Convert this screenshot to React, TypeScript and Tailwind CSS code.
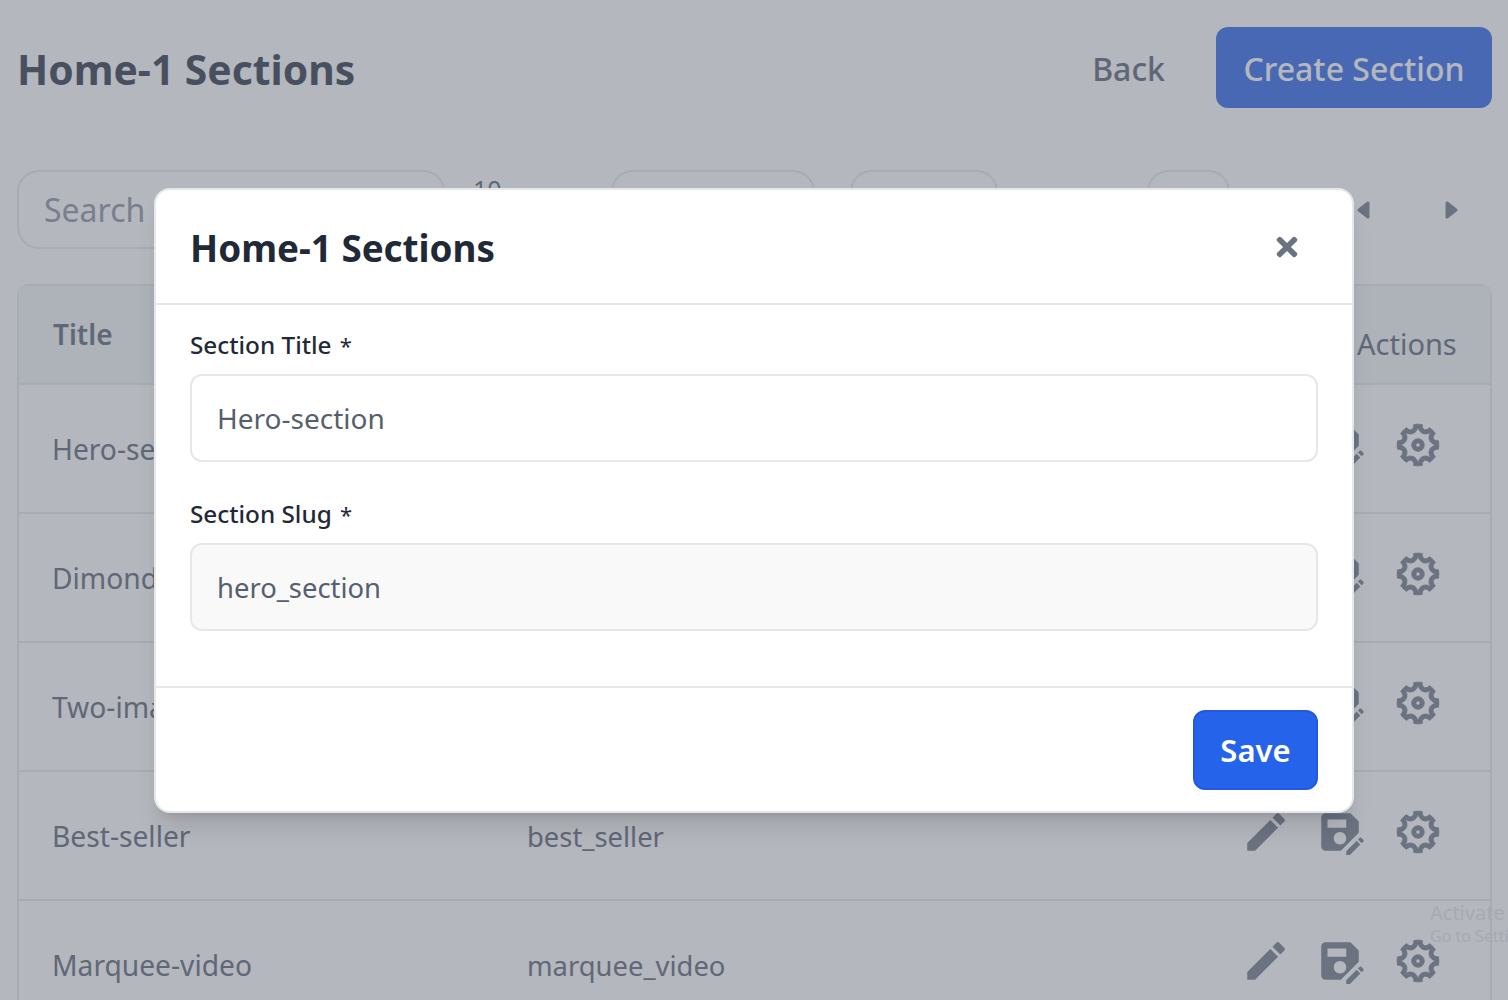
import { MdEdit, MdSaveAs } from "react-icons/md";
import { RiSettings5Line } from "react-icons/ri";
import { FaTimes } from "react-icons/fa";

const rows = [
  { title: "Hero-section", slug: "hero_section" },
  { title: "Dimond-section", slug: "dimond_section" },
  { title: "Two-image", slug: "two_image" },
  { title: "Best-seller", slug: "best_seller" },
  { title: "Marquee-video", slug: "marquee_video" },
];

function RowActions() {
  return (
    <div className="flex items-center -mt-[7px] text-[#8a909d]">
      <MdEdit className="w-[50px] h-[50px]" />
      <MdSaveAs className="w-[50px] h-[50px] ml-[24px]" />
      <RiSettings5Line className="w-[50px] h-[50px] ml-[28px]" stroke="currentColor" strokeWidth={0.4} />
    </div>
  );
}

function Caret({ flip }: { flip?: boolean }) {
  return (
    <svg viewBox="0 0 13 18" className={flip ? "w-[13px] h-[18px] rotate-180" : "w-[13px] h-[18px]"}>
      <path d="M11 2 L2 9 L11 16 Z" fill="currentColor" stroke="currentColor" strokeWidth="3" strokeLinejoin="round" />
    </svg>
  );
}

function SectionsPage() {
  return (
    <div className="pl-[17px] pr-[16px] h-[1000px] overflow-hidden bg-white text-[#79808f]">
      {/* Header */}
      <div className="flex items-center justify-between pt-[27px] pb-[62px]">
        <h1 className="pt-[4px] text-[40.8px] leading-[77px] font-bold text-[#525a68]">Home-1 Sections</h1>
        <div className="flex items-center gap-[51px]">
          <button className="pt-[2px] text-[32px] font-medium text-[#777e8c]">Back</button>
          <button className="pt-[2px] h-[81px] w-[276px] rounded-xl bg-[#5280f0] text-[32px] font-medium text-white">
            Create Section
          </button>
        </div>
      </div>

      {/* Filters */}
      <div className="flex items-center h-[79px]">
        <div className="w-[428px] h-[79px] flex items-center px-[25px] rounded-[22px] border-2 border-[#ebecf0] text-[32px] text-[#a0a5b2]">
          Search
        </div>
        <div className="w-[166px] pl-[28px] text-[25px] -mt-[40px]">10</div>
        <div className="w-[204px] h-[79px] rounded-[22px] border-2 border-[#ebecf0]" />
        <div className="w-[35px]" />
        <div className="w-[148px] h-[79px] rounded-[22px] border-2 border-[#ebecf0]" />
        <div className="w-[149px]" />
        <div className="w-[83px] h-[79px] rounded-[22px] border-2 border-[#ebecf0]" />
        <div className="flex flex-1 items-center justify-end gap-[75px] pr-[34px] text-[#8a909d]">
          <Caret />
          <Caret flip />
        </div>
      </div>

      {/* Table */}
      <div className="mt-[35px] rounded-t-xl border-2 border-b-0 border-[#ebecf0]">
        <div className="flex h-[99px] border-b-2 border-[#ebecf0] bg-[#f6f7f9]">
          <div className="w-[508px] pl-[34px] pt-[26px] text-[28px] leading-[44px] font-semibold">Title</div>
          <div className="flex-1" />
          <div className="w-[133px] pt-[36px] text-[29px] leading-[44px]">Actions</div>
        </div>
        {rows.map((row) => (
          <div key={row.slug} className="flex items-center h-[129px] border-b-2 border-[#ebecf0]">
            <div className="w-[508px] pl-[33px] pt-[2px] text-[28.2px]">{row.title}</div>
            <div className="flex-1 pt-[2px] text-[27.4px]">{row.slug}</div>
            <div className="w-[249px]">
              <RowActions />
            </div>
          </div>
        ))}
      </div>
    </div>
  );
}

export default function App() {
  return (
    <div className="relative h-[1000px] overflow-hidden font-['Noto_Sans',sans-serif]">
      <SectionsPage />

      {/* Windows activation watermark */}
      <div className="absolute left-[1430px] top-[899px] w-[78px] overflow-hidden whitespace-nowrap text-[#eaeaee]">
        <div className="text-[20px] leading-[27px]">Activate Windows</div>
        <div className="text-[16px] leading-[21px]">Go to Settings to activate</div>
      </div>

      {/* Modal */}
      <div className="absolute inset-0 z-10 flex justify-center pt-[188px] bg-[#374151]/[0.375]">
        <div className="w-[1200px] h-[625px] rounded-2xl bg-white shadow-xl border-2 border-[#e5e7eb] flex flex-col">
          <div className="flex items-center justify-between h-[115px] border-b-2 border-[#e5e7eb] pl-[34px] pr-[50px]">
            <h2 className="pt-[4px] text-[36.8px] font-bold text-[#1f2937]">Home-1 Sections</h2>
            <FaTimes className="w-[30px] h-[30px] text-[#6b7280]" />
          </div>
          <div className="flex-1 px-[34px] pt-[22px]">
            <label className="block text-[24.3px] leading-[36px] font-medium text-[#1f2937]">
              Section Title <span className="ml-[2px] text-[22px] font-normal">*</span>
            </label>
            <div className="mt-[11px] h-[88px] flex items-center pl-[25px] pr-[26px] rounded-xl border-2 border-[#e5e7eb] text-[28px] text-[#555f6e]">
              Hero-section
            </div>
            <label className="block mt-[34px] text-[24.3px] leading-[36px] font-medium text-[#1f2937]">
              Section Slug <span className="ml-[2px] text-[22px] font-normal">*</span>
            </label>
            <div className="mt-[11px] h-[88px] flex items-center pl-[25px] pr-[26px] pt-[2px] rounded-xl border-2 border-[#e5e7eb] bg-[#f9f9fa] text-[27.4px] text-[#555f6e]">
              hero_section
            </div>
          </div>
          <div className="flex justify-end h-[125px] border-t-2 border-[#e5e7eb] pr-[34px] pt-[22px]">
            <button className="w-[125px] h-[80px] rounded-xl border-2 border-[#2459dd] bg-[#2563eb] text-[31px] font-semibold text-white">
              Save
            </button>
          </div>
        </div>
      </div>
    </div>
  );
}
